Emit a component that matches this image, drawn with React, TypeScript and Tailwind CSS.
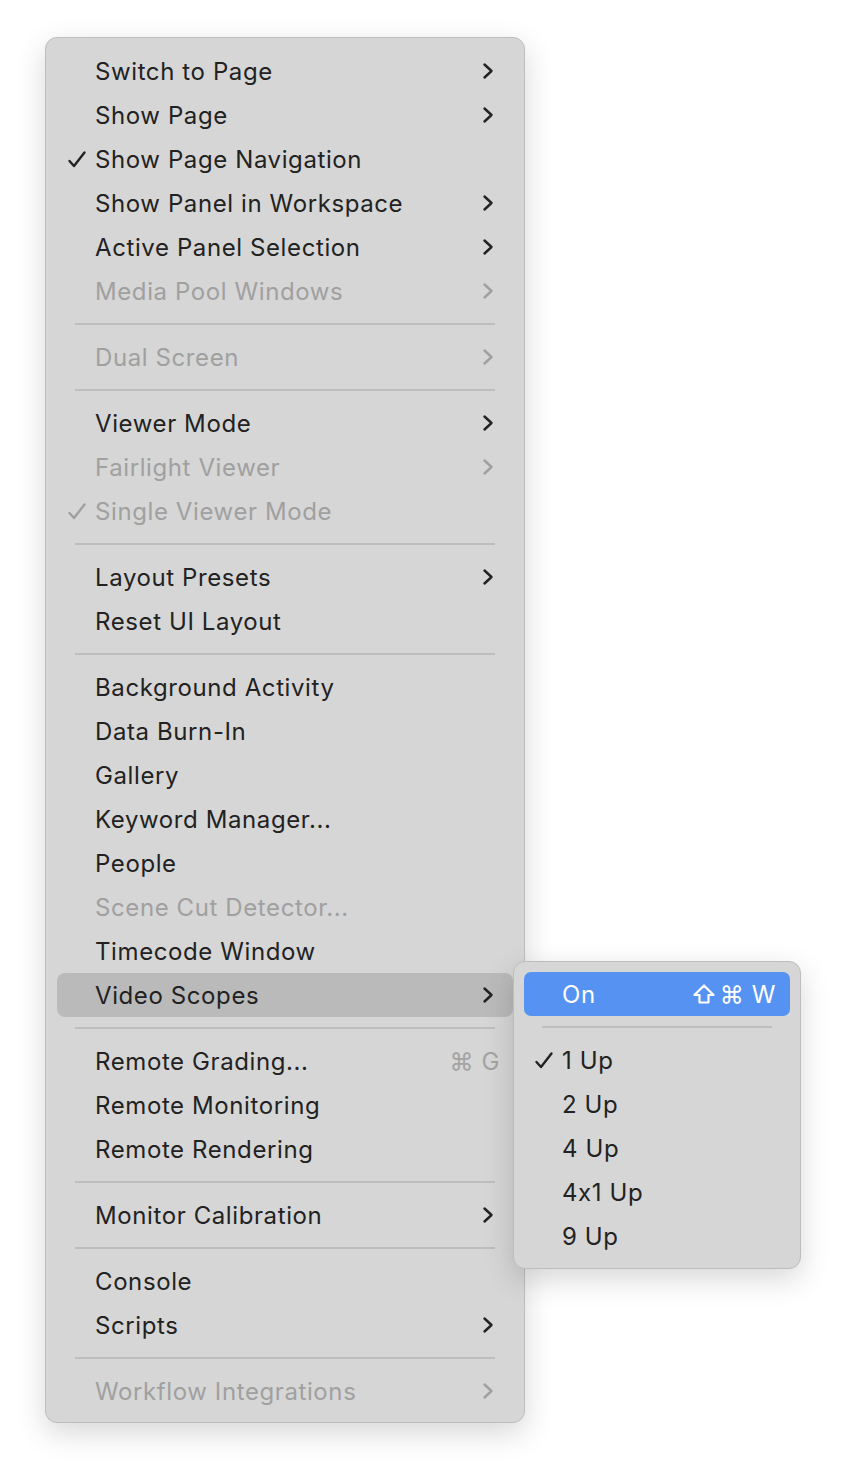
import React from "react"

type Entry =
    | { sep: true }
    | {
          sep?: false
          label: string
          disabled?: boolean
          checked?: boolean
          submenu?: boolean
          shortcut?: string
          active?: boolean
      }

const mainItems: Entry[] = [
    { label: "Switch to Page", submenu: true },
    { label: "Show Page", submenu: true },
    { label: "Show Page Navigation", checked: true },
    { label: "Show Panel in Workspace", submenu: true },
    { label: "Active Panel Selection", submenu: true },
    { label: "Media Pool Windows", submenu: true, disabled: true },
    { sep: true },
    { label: "Dual Screen", submenu: true, disabled: true },
    { sep: true },
    { label: "Viewer Mode", submenu: true },
    { label: "Fairlight Viewer", submenu: true, disabled: true },
    { label: "Single Viewer Mode", checked: true, disabled: true },
    { sep: true },
    { label: "Layout Presets", submenu: true },
    { label: "Reset UI Layout" },
    { sep: true },
    { label: "Background Activity" },
    { label: "Data Burn-In" },
    { label: "Gallery" },
    { label: "Keyword Manager..." },
    { label: "People" },
    { label: "Scene Cut Detector...", disabled: true },
    { label: "Timecode Window" },
    { label: "Video Scopes", submenu: true, active: true },
    { sep: true },
    { label: "Remote Grading...", shortcut: "⌘ G" },
    { label: "Remote Monitoring" },
    { label: "Remote Rendering" },
    { sep: true },
    { label: "Monitor Calibration", submenu: true },
    { sep: true },
    { label: "Console" },
    { label: "Scripts", submenu: true },
    { sep: true },
    { label: "Workflow Integrations", submenu: true, disabled: true },
]

function Chevron({ className }: { className?: string }) {
    return (
        <svg width="14" height="18" viewBox="0 0 14 18" className={className}>
            <path
                d="M3.5 2.5 L10.5 9 L3.5 15.5"
                fill="none"
                stroke="currentColor"
                strokeWidth="2.4"
                strokeLinecap="round"
                strokeLinejoin="round"
            />
        </svg>
    )
}

function Check({ className }: { className?: string }) {
    return (
        <svg width="20" height="20" viewBox="0 0 20 20" className={className}>
            <path
                d="M2.5 11 L7 16 L17.5 2.5"
                fill="none"
                stroke="currentColor"
                strokeWidth="2.4"
                strokeLinecap="round"
                strokeLinejoin="round"
            />
        </svg>
    )
}

function MainMenu() {
    return (
        <div className="w-[480px] rounded-[12px] border border-[#bdbdbd] bg-[#d6d6d6] px-[11px] pt-[11px] pb-[9px] shadow-[0_10px_30px_rgba(0,0,0,0.16)]">
            {mainItems.map((item, i) => {
                if (item.sep) {
                    return (
                        <div key={i} className="flex h-[22px] items-center px-[18px]">
                            <div className="h-[2px] w-full bg-[#bebebe]" />
                        </div>
                    )
                }
                const color = item.disabled ? "text-[#a0a0a0]" : "text-[#222222]"
                return (
                    <div
                        key={i}
                        className={`relative flex h-[44px] items-center rounded-[8px] ${
                            item.active ? "bg-[#bababa]" : ""
                        } ${color}`}
                    >
                        {item.checked && <Check className="absolute left-[10px] top-[13px]" />}
                        <span className="pt-[2px] pl-[38px]">{item.label}</span>
                        {item.submenu && <Chevron className="absolute right-[18px] top-[13px]" />}
                        {item.shortcut && (
                            <span className="absolute right-[13px] pt-[2px] text-[#a3a3a3]">{item.shortcut}</span>
                        )}
                    </div>
                )
            })}
        </div>
    )
}

const subItems = ["1 Up", "2 Up", "4 Up", "4x1 Up", "9 Up"]

function ScopesMenu() {
    return (
        <div className="w-[288px] rounded-[12px] border border-[#bdbdbd] bg-[#d6d6d6] px-[10px] pt-[10px] pb-[10px] text-[#222222] shadow-[0_10px_30px_rgba(0,0,0,0.16)]">
            <div className="flex h-[44px] items-center justify-between rounded-[7px] bg-[#5592f1] pl-[38px] pr-[14px] text-white">
                <span className="pt-[2px]">On</span>
                <span className="flex items-center gap-[4px]">
                    <svg width="24" height="22" viewBox="0 0 24 22">
                        <path
                            d="M12 2.5 L21.5 12 H16.5 V19.5 H7.5 V12 H2.5 Z"
                            fill="none"
                            stroke="currentColor"
                            strokeWidth="2.2"
                            strokeLinejoin="round"
                        />
                    </svg>
                    <span className="pt-[2px]">⌘ W</span>
                </span>
            </div>
            <div className="flex h-[22px] items-center px-[18px]">
                <div className="h-[2px] w-full bg-[#bebebe]" />
            </div>
            {subItems.map((label, i) => (
                <div key={label} className="relative flex h-[44px] items-center">
                    {i === 0 && <Check className="absolute left-[10px] top-[13px]" />}
                    <span className="pt-[2px] pl-[38px]">{label}</span>
                </div>
            ))}
        </div>
    )
}

export default function App() {
    return (
        <div className="min-h-[1476px] w-[846px] bg-white text-[24px] leading-none tracking-[0.6px] [font-family:Inter,'Noto_Sans',sans-serif] [font-feature-settings:'calt'_0]">
            <div className="relative pl-[45px] pt-[37px]">
                <MainMenu />
                <div className="absolute left-[513px] top-[961px]">
                    <ScopesMenu />
                </div>
            </div>
        </div>
    )
}
